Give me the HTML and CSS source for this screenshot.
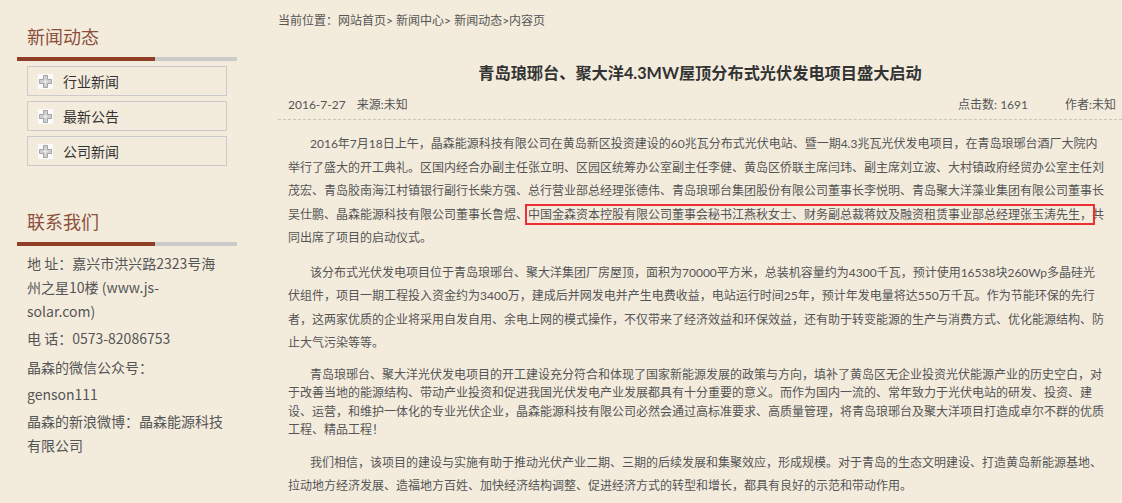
FILE: index.html
```html
<!DOCTYPE html>
<html lang="zh-CN">
  <head>
    <meta charset="UTF-8" />
    <title>新闻动态 - 内容页</title>
    <link rel="stylesheet" href="styles.css">
  </head>
  <body>
    <div class="page">
      <!-- 左侧栏 -->
      <aside class="sidebar">
        <h2 class="side-title">新闻动态</h2>
        <ul class="side-menu">
          <li><a href="#"><svg class="plus" width="15" height="15" viewBox="0 0 15 15"><rect width="15" height="15" fill="#fbfbfb"/><path d="M5.5 1.5h4v4h4v4h-4v4h-4v-4h-4v-4h4z" fill="#cfcfcf" stroke="#a5a5a5"/><path d="M7.5 5.5v4M5.5 7.5h4" stroke="#eee"/></svg>行业新闻</a></li>
          <li><a href="#"><svg class="plus" width="15" height="15" viewBox="0 0 15 15"><rect width="15" height="15" fill="#fbfbfb"/><path d="M5.5 1.5h4v4h4v4h-4v4h-4v-4h-4v-4h4z" fill="#cfcfcf" stroke="#a5a5a5"/><path d="M7.5 5.5v4M5.5 7.5h4" stroke="#eee"/></svg>最新公告</a></li>
          <li><a href="#"><svg class="plus" width="15" height="15" viewBox="0 0 15 15"><rect width="15" height="15" fill="#fbfbfb"/><path d="M5.5 1.5h4v4h4v4h-4v4h-4v-4h-4v-4h4z" fill="#cfcfcf" stroke="#a5a5a5"/><path d="M7.5 5.5v4M5.5 7.5h4" stroke="#eee"/></svg>公司新闻</a></li>
        </ul>

        <h2 class="side-title contact-title">联系我们</h2>
        <div class="contact">
          <p>地 址：嘉兴市洪兴路2323号海州之星10楼 (www.js-solar.com)</p>
          <p class="tel">电 话：0573-82086753</p>
          <p>晶森的微信公众号：</p>
          <p>genson111</p>
          <p>晶森的新浪微博：晶森能源科技有限公司</p>
        </div>
      </aside>

      <!-- 内容 -->
      <div class="main">
        <div class="crumbs">当前位置：<a href="#">网站首页</a>&gt; <a href="#">新闻中心</a>&gt; <a href="#">新闻动态</a>&gt;内容页</div>
        <h1 class="news-title">青岛琅琊台、聚大洋4.3MW屋顶分布式光伏发电项目盛大启动</h1>
        <div class="meta">
          <span class="date">2016-7-27</span><span>来源:未知</span>
          <span class="hits">点击数: 1691</span><span class="author">作者:未知</span>
        </div>
        <div class="article">
          <p>2016年7月18日上午，晶森能源科技有限公司在黄岛新区投资建设的60兆瓦分布式光伏电站、暨一期4.3兆瓦光伏发电项目，在青岛琅琊台酒厂大院内举行了盛大的开工典礼。区国内经合办副主任张立明、区园区统筹办公室副主任李健、黄岛区侨联主席闫玮、副主席刘立波、大村镇政府经贸办公室主任刘茂宏、青岛胶南海江村镇银行副行长柴方强、总行营业部总经理张德伟、青岛琅琊台集团股份有限公司董事长李悦明、青岛聚大洋藻业集团有限公司董事长吴仕鹏、晶森能源科技有限公司董事长鲁煜、<span class="mark">中国金森资本控股有限公司董事会秘书江燕秋女士、财务副总裁蒋妏及融资租赁事业部总经理张玉涛先生，</span>共同出席了项目的启动仪式。</p>
          <p>该分布式光伏发电项目位于青岛琅琊台、聚大洋集团厂房屋顶，面积为70000平方米，总装机容量约为4300千瓦，预计使用16538块260Wp多晶硅光伏组件，项目一期工程投入资金约为3400万，建成后并网发电并产生电费收益，电站运行时间25年，预计年发电量将达550万千瓦。作为节能环保的先行者，这两家优质的企业将采用自发自用、余电上网的模式操作，不仅带来了经济效益和环保效益，还有助于转变能源的生产与消费方式、优化能源结构、防止大气污染等等。</p>
          <p class="tight">青岛琅琊台、聚大洋光伏发电项目的开工建设充分符合和体现了国家新能源发展的政策与方向，填补了黄岛区无企业投资光伏能源产业的历史空白，对于改善当地的能源结构、带动产业投资和促进我国光伏发电产业发展都具有十分重要的意义。而作为国内一流的、常年致力于光伏电站的研发、投资、建设、运营，和维护一体化的专业光伏企业，晶森能源科技有限公司必然会通过高标准要求、高质量管理，将青岛琅琊台及聚大洋项目打造成卓尔不群的优质工程、精品工程！</p>
          <p>我们相信，该项目的建设与实施有助于推动光伏产业二期、三期的后续发展和集聚效应，形成规模。对于青岛的生态文明建设、打造黄岛新能源基地、拉动地方经济发展、造福地方百姓、加快经济结构调整、促进经济方式的转型和增长，都具有良好的示范和带动作用。</p>
        </div>
      </div>
    </div>
  </body>
</html>
```

FILE: styles.css
```css
body {
  margin: 0;
  background-color: #f3ecdd;
  font-family: Lato, "Noto Sans CJK SC", sans-serif;
  color: #555;
}
a {
  color: inherit;
  text-decoration: none;
}
.page {
  display: flex;
  align-items: flex-start;
}

/* 左侧栏 */
.sidebar {
  width: 220px;
  margin-left: 17px;
  flex-shrink: 0;
  font-family: "Noto Sans CJK SC", sans-serif;
}
.side-title {
  margin: 0;
  padding: 24px 10px 13px;
  font-size: 18px;
  font-weight: normal;
  line-height: 24px;
  color: #8d4f3c;
  background: linear-gradient(to right, #8e3f26 138px, #cbcbcb 138px) left bottom / 100% 4px no-repeat;
}
.side-menu {
  list-style: none;
  margin: 5px 0 0 10px;
  padding: 0;
  width: 200px;
}
.side-menu li {
  margin-bottom: 5px;
}
.side-menu a {
  display: flex;
  align-items: center;
  height: 28px;
  padding-left: 10px;
  border: 1px solid #cbcbcb;
  font-size: 14px;
  color: #333;
}
.plus {
  margin-right: 10px;
}
.contact-title {
  margin-top: 19px;
}
.contact {
  margin-top: 5px;
  padding-left: 10px;
  width: 200px;
  font-size: 14px;
}
.contact p {
  margin: 0 0 3px;
  line-height: 24px;
}
.contact .tel {
  margin-bottom: 5px;
}

/* 内容 */
.main {
  flex: 1;
  min-width: 0;
  margin-left: 41px;
  padding-top: 9px;
}
.crumbs {
  font-size: 12px;
  line-height: 24px;
}
.news-title {
  margin: 25px 0 0;
  font-size: 16.2px;
  line-height: 30px;
  text-align: center;
  color: #333;
}
.meta {
  display: flex;
  margin-top: 5px;
  padding: 0 6px 2px 10px;
  font-size: 12px;
  line-height: 24px;
  border-bottom: 1px dashed #c9c3b8;
}
.meta .date {
  margin-right: 11px;
}
.meta .hits {
  margin-left: auto;
  margin-right: 37px;
}
.article {
  padding: 12px 17px 0 10px;
  font-size: 12px;
}
.article p {
  margin: 0 0 11px;
  line-height: 23.5px;
  text-indent: 22px;
}
.article p.tight {
  line-height: 18.5px;
}
/* 红框标注 */
.mark {
  outline: 2px solid #ec2e35;
  outline-offset: 1px;
}
```
